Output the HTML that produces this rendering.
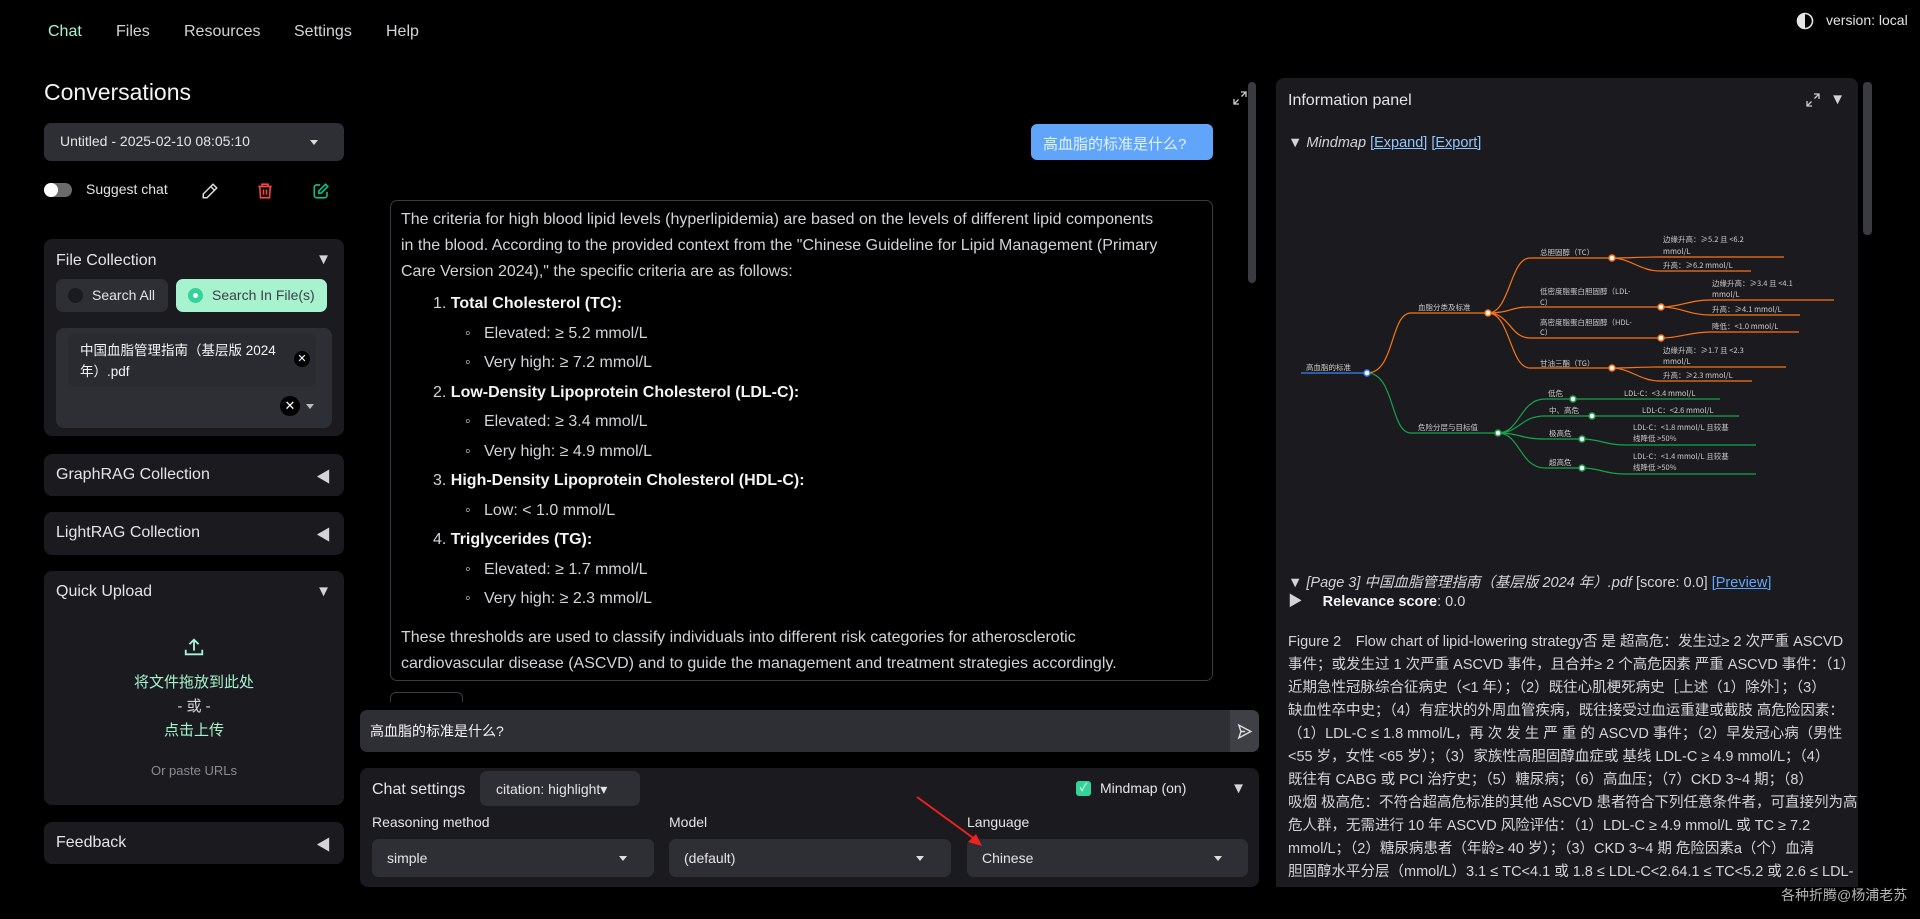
<!DOCTYPE html>
<html><head><meta charset="utf-8">
<style>
*{box-sizing:border-box;margin:0;padding:0}
body{width:1920px;height:919px;background:#000;color:#e4e4e7;font-family:"Liberation Sans","Noto Sans CJK SC",sans-serif;position:relative;overflow:hidden}
.a{position:absolute}
.nav{top:23px;font-size:16px;color:#d4d4d8}
.panel{position:absolute;background:#1b1b1f;border-radius:8px}
.ptitle{position:absolute;left:12px;font-size:16px;color:#e4e4e7}
.tri{position:absolute;right:13px;color:#d4d4d8;font-size:15px}
.sel{position:absolute;background:#2e2f35;border-radius:7px;font-size:14px;color:#e4e4e7}
.caret{position:absolute;width:0;height:0;border-left:4px solid transparent;border-right:4px solid transparent;border-top:5px solid #ddd}
.msg{font-size:16px;color:#d4d4d8;line-height:26px}
.msg b{color:#f4f4f5}
.info{font-size:14.5px;color:#d4d4d8;line-height:23px}
.fig{white-space:nowrap}
</style></head><body>
<div class="a nav" style="left:48px;color:#a7f3d0">Chat</div>
<div class="a nav" style="left:116px">Files</div>
<div class="a nav" style="left:184px">Resources</div>
<div class="a nav" style="left:294px">Settings</div>
<div class="a nav" style="left:386px">Help</div>
<svg class="a" style="left:1796px;top:12px" width="18" height="18" viewBox="0 0 18 18"><circle cx="9" cy="9" r="7.5" fill="none" stroke="#e5e5e5" stroke-width="1.6"/><path d="M9 1.5A7.5 7.5 0 0 0 9 16.5Z" fill="#e5e5e5"/></svg>
<div class="a" style="left:1826px;top:12px;font-size:14px;color:#e4e4e7">version: local</div>

<div class="a" style="left:44px;top:79px;font-size:23px;color:#f4f4f5">Conversations</div>
<div class="sel" style="left:44px;top:123px;width:300px;height:38px"><span class="a" style="left:16px;top:10px">Untitled - 2025-02-10 08:05:10</span><div class="caret" style="left:266px;top:17px"></div></div>
<div class="a" style="left:44px;top:183px;width:28px;height:14px;border-radius:7px;background:#6b6b6b"></div>
<div class="a" style="left:44px;top:183px;width:14px;height:14px;border-radius:7px;background:#fff"></div>
<div class="a" style="left:86px;top:181px;font-size:14px">Suggest chat</div>
<svg class="a" style="left:201px;top:182px" width="18" height="18" viewBox="0 0 24 24" fill="none" stroke="#ddd" stroke-width="2"><path d="M16 3l5 5L8 21H3v-5z"/><path d="M13 6l5 5"/></svg>
<svg class="a" style="left:256px;top:182px" width="18" height="18" viewBox="0 0 24 24" fill="none" stroke="#ef4444" stroke-width="2.2"><path d="M3 6h18M8 6V3h8v3M5 6l1 15h12l1-15M10 10v7M14 10v7"/></svg>
<svg class="a" style="left:312px;top:182px" width="18" height="18" viewBox="0 0 24 24" fill="none" stroke="#10b981" stroke-width="2.2"><path d="M11 4H6a3 3 0 0 0-3 3v11a3 3 0 0 0 3 3h11a3 3 0 0 0 3-3v-5"/><path d="M18 3l3 3-9 9H9v-3z"/></svg>

<div class="panel" style="left:44px;top:239px;width:300px;height:197px">
 <div class="ptitle" style="top:13px">File Collection</div><div class="tri" style="top:12px">▼</div>
 <div class="a" style="left:12px;top:40px;width:112px;height:33px;background:#2e2f35;border-radius:7px"><div class="a" style="left:12px;top:9px;width:15px;height:15px;border-radius:50%;background:#1b1b1f"></div><span class="a" style="left:36px;top:8px;font-size:14px">Search All</span></div>
 <div class="a" style="left:132px;top:40px;width:151px;height:33px;background:#a7f3d0;border-radius:7px"><div class="a" style="left:12px;top:9px;width:15px;height:15px;border-radius:50%;background:#34d399"></div><div class="a" style="left:17px;top:14px;width:5px;height:5px;border-radius:50%;background:#fff"></div><span class="a" style="left:36px;top:8px;font-size:14px;color:#3f3f46">Search In File(s)</span></div>
 <div class="a" style="left:12px;top:89px;width:276px;height:100px;background:#2e2f35;border-radius:8px">
  <div class="a" style="left:12px;top:6px;width:248px;height:53px;background:#2a2b30;border-radius:7px"></div>
  <div class="a" style="left:24px;top:12px;width:210px;font-size:13.5px;line-height:21px;color:#f4f4f5">中国血脂管理指南（基层版 2024 年）.pdf</div>
  <div class="a" style="left:238px;top:23px;width:16px;height:16px;border-radius:50%;background:#000;color:#fff;font-size:11px;text-align:center;line-height:16px">✕</div>
  <div class="a" style="left:224px;top:68px;width:20px;height:20px;border-radius:50%;background:#000;color:#fff;font-size:13px;text-align:center;line-height:20px">✕</div>
  <div class="caret" style="left:250px;top:76px;border-top-color:#bbb"></div>
 </div>
</div>
<div class="panel" style="left:44px;top:454px;width:300px;height:42px"><div class="ptitle" style="top:12px">GraphRAG Collection</div><div class="tri" style="top:12px">◀</div></div>
<div class="panel" style="left:44px;top:512px;width:300px;height:43px"><div class="ptitle" style="top:12px">LightRAG Collection</div><div class="tri" style="top:12px">◀</div></div>
<div class="panel" style="left:44px;top:571px;width:300px;height:234px">
 <div class="ptitle" style="top:12px">Quick Upload</div><div class="tri" style="top:12px">▼</div>
 <svg class="a" style="left:139px;top:65px" width="22" height="22" viewBox="0 0 24 24" fill="none" stroke="#a7f3d0" stroke-width="2"><path d="M12 16V4M7 9l5-5 5 5M3 15v5h18v-5"/></svg>
 <div class="a" style="left:0;top:100px;width:300px;text-align:center;font-size:15px;line-height:24px;color:#a7f3d0">将文件拖放到此处<br><span style="color:#d4d4d8">- 或 -</span><br>点击上传</div>
 <div class="a" style="left:0;top:192px;width:300px;text-align:center;font-size:13px;color:#8b8b93">Or paste URLs</div>
</div>
<div class="panel" style="left:44px;top:822px;width:300px;height:42px"><div class="ptitle" style="top:12px">Feedback</div><div class="tri" style="top:12px">◀</div></div>

<svg class="a" style="left:1233px;top:91px" width="14" height="14" viewBox="0 0 14 14" fill="none" stroke="#ccc" stroke-width="1.3"><path d="M8 1h5v5M13 1L8.5 5.5M6 13H1V8M1 13l4.5-4.5"/></svg>
<div class="a" style="left:1248px;top:82px;width:8px;height:201px;border-radius:4px;background:#3a3b40"></div>
<div class="a" style="left:1031px;top:124px;width:182px;height:36px;background:#60a5fa;border-radius:6px;color:#e0f2fe;font-size:15px;padding:9px 12px">高血脂的标准是什么?</div>
<div class="a msg" style="left:390px;top:200px;width:823px;height:481px;border:1px solid #3a3a40;border-radius:7px;padding:6px 10px">
<div style="white-space:nowrap">The criteria for high blood lipid levels (hyperlipidemia) are based on the levels of different lipid components<br>in the blood. According to the provided context from the "Chinese Guideline for Lipid Management (Primary<br>Care Version 2024)," the specific criteria are as follows:</div>
<div style="position:absolute;left:42px;top:88px;line-height:29.5px">
1. <b>Total Cholesterol (TC):</b><br>
<span style="margin-left:32px">◦&nbsp;&nbsp; Elevated: ≥ 5.2 mmol/L</span><br>
<span style="margin-left:32px">◦&nbsp;&nbsp; Very high: ≥ 7.2 mmol/L</span><br>
2. <b>Low-Density Lipoprotein Cholesterol (LDL-C):</b><br>
<span style="margin-left:32px">◦&nbsp;&nbsp; Elevated: ≥ 3.4 mmol/L</span><br>
<span style="margin-left:32px">◦&nbsp;&nbsp; Very high: ≥ 4.9 mmol/L</span><br>
3. <b>High-Density Lipoprotein Cholesterol (HDL-C):</b><br>
<span style="margin-left:32px">◦&nbsp;&nbsp; Low: &lt; 1.0 mmol/L</span><br>
4. <b>Triglycerides (TG):</b><br>
<span style="margin-left:32px">◦&nbsp;&nbsp; Elevated: ≥ 1.7 mmol/L</span><br>
<span style="margin-left:32px">◦&nbsp;&nbsp; Very high: ≥ 2.3 mmol/L</span>
</div>
<div style="position:absolute;left:10px;top:424px;width:790px">These thresholds are used to classify individuals into different risk categories for atherosclerotic<br>cardiovascular disease (ASCVD) and to guide the management and treatment strategies accordingly.</div>
</div>
<div class="a" style="left:390px;top:692px;width:73px;height:10px;border:1px solid #3a3a40;border-bottom:none;border-radius:6px 6px 0 0"></div>

<div class="a" style="left:360px;top:710px;width:899px;height:42px;background:#2e2f35;border-radius:7px"><span class="a" style="left:10px;top:11px;font-size:14px;color:#f4f4f5">高血脂的标准是什么?</span>
<div class="a" style="left:870px;top:0;width:29px;height:42px;background:#3f4046;border-radius:0 7px 7px 0"></div>
<svg class="a" style="left:876px;top:13px" width="17" height="17" viewBox="0 0 24 24" fill="none" stroke="#ddd" stroke-width="2"><path d="M4 3l17 9-17 9 3-9zM7 12h6"/></svg></div>

<div class="panel" style="left:360px;top:768px;width:899px;height:119px">
 <div class="a" style="left:12px;top:13px;font-size:16px">Chat settings</div>
 <div class="a" style="left:120px;top:3px;width:160px;height:35px;background:#2e2f35;border-radius:7px;font-size:14px;padding:10px 16px">citation: highlight▾</div>
 <div class="a" style="left:716px;top:13px;width:15px;height:15px;background:#34d399;border-radius:3px;color:#fff;font-size:11px;text-align:center;line-height:15px">✓</div>
 <div class="a" style="left:740px;top:12px;font-size:14px">Mindmap (on)</div>
 <div class="tri" style="top:12px">▼</div>
 <div class="a" style="left:12px;top:46px;font-size:14px">Reasoning method</div>
 <div class="a" style="left:309px;top:46px;font-size:14px">Model</div>
 <div class="a" style="left:607px;top:46px;font-size:14px">Language</div>
 <div class="sel" style="left:12px;top:71px;width:282px;height:38px"><span class="a" style="left:15px;top:11px">simple</span><div class="caret" style="left:247px;top:17px"></div></div>
 <div class="sel" style="left:309px;top:71px;width:282px;height:38px"><span class="a" style="left:15px;top:11px">(default)</span><div class="caret" style="left:247px;top:17px"></div></div>
 <div class="sel" style="left:607px;top:71px;width:281px;height:38px"><span class="a" style="left:15px;top:11px">Chinese</span><div class="caret" style="left:247px;top:17px"></div></div>
</div>
<svg class="a" style="left:910px;top:790px" width="80" height="65"><path d="M7 7L66 50" stroke="#ef2020" stroke-width="2"/><path d="M72 56L58 52 66 44Z" fill="#ef2020"/></svg>

<div class="panel" style="left:1276px;top:78px;width:582px;height:809px;border-radius:8px 8px 0 0;overflow:hidden">
 <div class="a" style="left:12px;top:14px;font-size:16px">Information panel</div>
 <svg class="a" style="left:530px;top:15px" width="14" height="14" viewBox="0 0 14 14" fill="none" stroke="#ccc" stroke-width="1.3"><path d="M8 1h5v5M13 1L8.5 5.5M6 13H1V8M1 13l4.5-4.5"/></svg>
 <div class="tri" style="top:13px">▼</div>
 <div class="a info" style="left:12px;top:54px">▼ <i>Mindmap</i> <span style="color:#93c5fd;text-decoration:underline">[Expand]</span> <span style="color:#93c5fd;text-decoration:underline">[Export]</span></div>
 <div class="a info" style="left:12px;top:494px;white-space:nowrap">▼ <i>[Page 3] 中国血脂管理指南（基层版 2024 年）.pdf</i> [score: 0.0] <span style="color:#60a5fa;text-decoration:underline">[Preview]</span></div>
 <div class="a info" style="left:12px;top:513px">▶ &nbsp;&nbsp;&nbsp;&nbsp;<b style="color:#f4f4f5">Relevance score</b>: 0.0</div>
 <div class="a info fig" style="left:12px;top:553px">
 <div>Figure 2　Flow chart of lipid-lowering strategy否 是 超高危：发生过≥ 2 次严重 ASCVD</div>
 <div>事件；或发生过 1 次严重 ASCVD 事件，且合并≥ 2 个高危因素 严重 ASCVD 事件：（1）</div>
 <div>近期急性冠脉综合征病史（&lt;1 年）；（2）既往心肌梗死病史［上述（1）除外］；（3）</div>
 <div>缺血性卒中史；（4）有症状的外周血管疾病，既往接受过血运重建或截肢 高危险因素：</div>
 <div>（1）LDL-C ≤ 1.8 mmol/L，再 次 发 生 严 重 的 ASCVD 事件；（2）早发冠心病（男性</div>
 <div>&lt;55 岁，女性 &lt;65 岁）；（3）家族性高胆固醇血症或 基线 LDL-C ≥ 4.9 mmol/L；（4）</div>
 <div>既往有 CABG 或 PCI 治疗史；（5）糖尿病；（6）高血压；（7）CKD 3~4 期；（8）</div>
 <div>吸烟 极高危：不符合超高危标准的其他 ASCVD 患者符合下列任意条件者，可直接列为高</div>
 <div>危人群，无需进行 10 年 ASCVD 风险评估：（1）LDL-C ≥ 4.9 mmol/L 或 TC ≥ 7.2</div>
 <div>mmol/L；（2）糖尿病患者（年龄≥ 40 岁）；（3）CKD 3~4 期 危险因素a（个）血清</div>
 <div>胆固醇水平分层（mmol/L）3.1 ≤ TC&lt;4.1 或 1.8 ≤ LDL-C&lt;2.64.1 ≤ TC&lt;5.2 或 2.6 ≤ LDL-</div>
 </div>
</div>
<div class="a" style="left:1863px;top:82px;width:9px;height:153px;border-radius:4px;background:#3a3b40"></div>
<div class="a" style="left:1781px;top:885px;font-size:14px;color:#b4b4b4">各种折腾@杨浦老苏</div>

<svg class="a" style="left:0;top:0" width="1920" height="919" font-family="Noto Sans CJK SC,sans-serif" font-size="7.5" fill="#ccc">
<g fill="none" stroke-width="1.2">
<path d="M1301 373H1367" stroke="#3b82f6"/>
<path d="M1367 373C1395 373 1390 313 1411 313H1488" stroke="#f97316"/>
<path d="M1367 373C1395 373 1390 433 1411 433H1498" stroke="#16a34a"/>
<path d="M1488 313C1510 313 1510 258 1530 258H1612M1488 313C1510 313 1510 307 1530 307H1661M1488 313C1510 313 1510 338 1530 338H1661M1488 313C1510 313 1510 368 1530 368H1612" stroke="#f97316"/>
<path d="M1612 258C1630 258 1640 257 1660 257H1784M1612 258C1630 258 1640 271 1660 271H1751M1661 307C1680 307 1690 300 1710 300H1834M1661 307C1680 307 1690 315 1710 315H1800M1661 338C1680 338 1690 332 1710 332H1799M1612 368C1630 368 1640 367 1660 367H1786M1612 368C1630 368 1640 381 1660 381H1752" stroke="#f97316"/>
<path d="M1498 433C1520 433 1520 399 1545 399H1720M1498 433C1520 433 1520 416 1545 416H1739M1498 433C1520 433 1520 439 1545 439H1582C1600 439 1605 445 1625 445H1756M1498 433C1520 433 1520 468 1545 468H1582C1600 468 1605 474 1625 474H1756" stroke="#16a34a"/>
</g>
<g stroke-width="1.5">
<circle cx="1367" cy="373" r="3" fill="#fff" stroke="#3b82f6"/>
<circle cx="1488" cy="313" r="3" fill="#fff" stroke="#f97316"/><circle cx="1612" cy="258" r="3" fill="#fff" stroke="#f97316"/><circle cx="1661" cy="307" r="3" fill="#fff" stroke="#f97316"/><circle cx="1661" cy="338" r="3" fill="#fff" stroke="#f97316"/><circle cx="1612" cy="368" r="3" fill="#fff" stroke="#f97316"/>
<circle cx="1498" cy="433" r="3" fill="#fff" stroke="#16a34a"/><circle cx="1573" cy="399" r="3" fill="#fff" stroke="#16a34a"/><circle cx="1592" cy="416" r="3" fill="#fff" stroke="#16a34a"/><circle cx="1582" cy="439" r="3" fill="#fff" stroke="#16a34a"/><circle cx="1582" cy="468" r="3" fill="#fff" stroke="#16a34a"/>
</g>
<text x="1306" y="370">高血脂的标准</text>
<text x="1418" y="310">血脂分类及标准</text>
<text x="1418" y="430">危险分层与目标值</text>
<text x="1540" y="255">总胆固醇（TC）</text>
<text x="1540" y="294">低密度脂蛋白胆固醇（LDL-</text><text x="1540" y="305">C）</text>
<text x="1540" y="325">高密度脂蛋白胆固醇（HDL-</text><text x="1540" y="335">C）</text>
<text x="1540" y="366">甘油三酯（TG）</text>
<text x="1663" y="242">边缘升高：≥5.2 且 &lt;6.2</text><text x="1663" y="254">mmol/L</text><text x="1663" y="268">升高：≥6.2 mmol/L</text>
<text x="1712" y="286">边缘升高：≥3.4 且 &lt;4.1</text><text x="1712" y="297">mmol/L</text><text x="1712" y="312">升高：≥4.1 mmol/L</text>
<text x="1712" y="329">降低：&lt;1.0 mmol/L</text>
<text x="1663" y="353">边缘升高：≥1.7 且 &lt;2.3</text><text x="1663" y="364">mmol/L</text><text x="1663" y="378">升高：≥2.3 mmol/L</text>
<text x="1548" y="396">低危</text><text x="1624" y="396">LDL-C：&lt;3.4 mmol/L</text>
<text x="1549" y="413">中、高危</text><text x="1642" y="413">LDL-C：&lt;2.6 mmol/L</text>
<text x="1549" y="436">极高危</text><text x="1633" y="430">LDL-C：&lt;1.8 mmol/L 且较基</text><text x="1633" y="441">线降低 &gt;50%</text>
<text x="1549" y="465">超高危</text><text x="1633" y="459">LDL-C：&lt;1.4 mmol/L 且较基</text><text x="1633" y="470">线降低 &gt;50%</text>
</svg>
</body></html>
